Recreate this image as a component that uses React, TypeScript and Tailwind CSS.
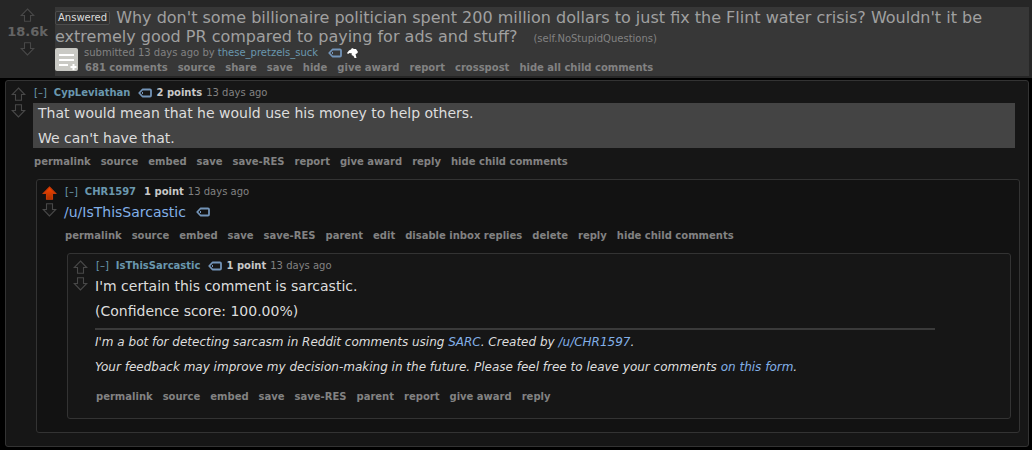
import type { ReactNode } from "react";

const LINK = "text-[#82b0e8] hover:underline";

function VoteArrow({ down, active, label }: { down?: boolean; active?: boolean; label: string }) {
  return (
    <button type="button" aria-label={label} className="block">
      <svg width="15" height="14" viewBox="0 0 15 14" className={down ? "rotate-180" : ""}>
        <defs>
          <linearGradient id="upvoted" x1="0" y1="0" x2="0" y2="1">
            <stop offset="0" stopColor="#ff4500" />
            <stop offset="1" stopColor="#a83200" />
          </linearGradient>
        </defs>
        <path
          d="M7.5 1 L13.8 7.5 H10.5 V13.2 H4.5 V7.5 H1.2 Z"
          fill={active ? "url(#upvoted)" : "#1c1c1c"}
          fillOpacity={active ? 1 : 0.5}
          stroke={active ? "#c83a06" : "#484848"}
          strokeWidth="1.1"
        />
      </svg>
    </button>
  );
}

function TagIcon() {
  return (
    <button type="button" aria-label="Tag user" className="inline-block shrink-0">
      <svg width="14" height="10" viewBox="0 0 14 10" fill="none" className="block">
        <path d="M4.500 1.500 H12 Q13 1.500 13 2.500 V7.500 Q13 8.500 12 8.500 H4.500 L1.200 5 Z" stroke="#7394b8" strokeWidth="1.8" strokeLinejoin="round" />
        <rect x="4" y="4" width="1" height="2" fill="#7394b8" />
      </svg>
    </button>
  );
}

function SelfPostThumb() {
  return (
    <svg width="23" height="23" viewBox="0 0 23 23" className="shrink-0" aria-hidden="true">
      <rect width="23" height="23" rx="2" fill="#c9c9c4" />
      <path d="M4 7h15M4 12h15M4 17h9" stroke="#fff" strokeWidth="2" />
      <path d="M18.500 16v6M15.500 19h6" stroke="#fff" strokeWidth="2" />
    </svg>
  );
}

function UserBadge() {
  return (
    <svg width="11" height="11" viewBox="0 0 11 11" aria-hidden="true" className="block">
      <path d="M0 5 L2 2.500 L4 1.500 L5 0 L7 1 L9 1 L10 2.500 L11 4 L10 5.500 L8.500 6 L9.500 10 L7.500 10 L6.500 8 L4.500 7 L5 5.500 L2.500 5 L1 6 Z" fill="#fff" />
    </svg>
  );
}

function Actions({ items }: { items: string[] }) {
  return (
    <ul className="flex flex-wrap gap-x-[10px] px-px text-[10px] leading-4 font-bold text-[#828282]">
      {items.map((item) => (
        <li key={item}>
          <a href="#" className="hover:underline">{item}</a>
        </li>
      ))}
    </ul>
  );
}

type CommentProps = {
  author: string;
  points: string;
  tagged?: boolean;
  upvoted?: boolean;
  shade: string;
  actions: string[];
  body: ReactNode;
  children?: ReactNode;
};

function Comment({ author, points, tagged, upvoted, shade, actions, body, children }: CommentProps) {
  return (
    <article className={`flex rounded-[3px] border border-[#333] pt-1 pr-2 pb-[13px] ${shade}`}>
      <div className="flex w-[27px] shrink-0 flex-col gap-[3px] pt-[2px] pl-[5px]">
        <VoteArrow label="upvote" active={upvoted} />
        <VoteArrow label="downvote" down />
      </div>
      <div className="min-w-0 flex-1">
        <header className="flex items-center gap-1 pl-px text-[10px] leading-4 text-[#828282]">
          <button type="button" aria-label="Collapse comment" className="mr-[3px] text-[#6a98af]">[–]</button>
          <a href="#" className="mr-1 font-bold text-[#6a98af]">{author}</a>
          {tagged && <TagIcon />}
          <span className="font-bold text-[#c8c8c8]">{points}</span>
          <time>13 days ago</time>
        </header>
        <div className="mt-[2px] text-[14px] leading-5 text-[#ddd]">{body}</div>
        <div className="mt-[6px]">
          <Actions items={actions} />
        </div>
        {children && <div className="mt-[9px] ml-[3px]">{children}</div>}
      </div>
    </article>
  );
}

function Post() {
  return (
    <header className="flex bg-[#262626] pt-[7px] pr-[3px] pb-[2px]">
      <div className="flex w-[55px] shrink-0 flex-col items-center gap-[2px] pt-px">
        <VoteArrow label="upvote" />
        <div className="text-[13px] leading-4 font-bold text-[#646464]">18.6k</div>
        <VoteArrow label="downvote" down />
      </div>
      <div className="min-w-0 flex-1 bg-[#373737] pt-px">
        <h1 className="text-[16px] leading-[19px] text-[#a0a0a0]">
          <span className="mr-[6px] inline-block rounded-[2px] border border-[#4c4c4c] bg-[#303030] px-[2px] align-[2px] text-[10px] leading-3 text-[#ddd]">
            Answered
          </span>
          <a href="#">
            Why don't some billionaire politician spent 200 million dollars to just fix the Flint water crisis?
            Wouldn't it be extremely good PR compared to paying for ads and stuff?
          </a>
          <a href="#" className="ml-4 text-[10px] leading-3 text-[#828282]">(self.NoStupidQuestions)</a>
        </h1>
        <div className="flex gap-[6px]">
          <div className="pt-[2px]">
            <SelfPostThumb />
          </div>
          <div>
            <p className="flex items-center text-[10px] leading-[14px] text-[#828282]">
              submitted 13 days ago by&nbsp;
              <a href="#" className="mr-[10px] text-[#6a98af]">these_pretzels_suck</a>
              <TagIcon />
              <span className="ml-[5px]"><UserBadge /></span>
            </p>
            <Actions
              items={["681 comments", "source", "share", "save", "hide", "give award", "report", "crosspost", "hide all child comments"]}
            />
          </div>
        </div>
      </div>
    </header>
  );
}

export default function App() {
  return (
    <div className="min-h-screen bg-black font-['DejaVu_Sans',sans-serif]">
      <Post />
      <main className="pt-[2px] pr-[3px] pb-[3px] pl-[5px]">
        <Comment
          author="CypLeviathan"
          points="2 points"
          tagged
          shade="bg-[#161616]"
          actions={["permalink", "source", "embed", "save", "save-RES", "report", "give award", "reply", "hide child comments"]}
          body={
            <div className="mr-[5px] flex flex-col gap-[5px] bg-[#444] px-[5px]">
              <p>That would mean that he would use his money to help others.</p>
              <p>We can't have that.</p>
            </div>
          }
        >
          <Comment
            author="CHR1597"
            points="1 point"
            upvoted
            shade="bg-[#121212]"
            actions={["permalink", "source", "embed", "save", "save-RES", "parent", "edit", "disable inbox replies", "delete", "reply", "hide child comments"]}
            body={
              <p className="flex items-center gap-[10px]">
                <a href="#" className={LINK}>/u/IsThisSarcastic</a>
                <TagIcon />
              </p>
            }
          >
            <Comment
              author="IsThisSarcastic"
              points="1 point"
              tagged
              shade="bg-[#161616]"
              actions={["permalink", "source", "embed", "save", "save-RES", "parent", "report", "give award", "reply"]}
              body={
                <div className="flex flex-col gap-[5px] pb-[6px]">
                  <p>I'm certain this comment is sarcastic.</p>
                  <p>(Confidence score: 100.00%)</p>
                  <hr className="mt-[2px] mb-[-3px] max-w-[840px] border-t-2 border-[#3a3a3a]" />
                  <p className="text-[12px] italic">
                    I'm a bot for detecting sarcasm in Reddit comments using <a href="#" className={LINK}>SARC</a>. Created by{" "}
                    <a href="#" className={LINK}>/u/CHR1597</a>.
                  </p>
                  <p className="text-[12px] italic">
                    Your feedback may improve my decision-making in the future. Please feel free to leave your comments{" "}
                    <a href="#" className={LINK}>on this form</a>.
                  </p>
                </div>
              }
            />
          </Comment>
        </Comment>
      </main>
    </div>
  );
}
